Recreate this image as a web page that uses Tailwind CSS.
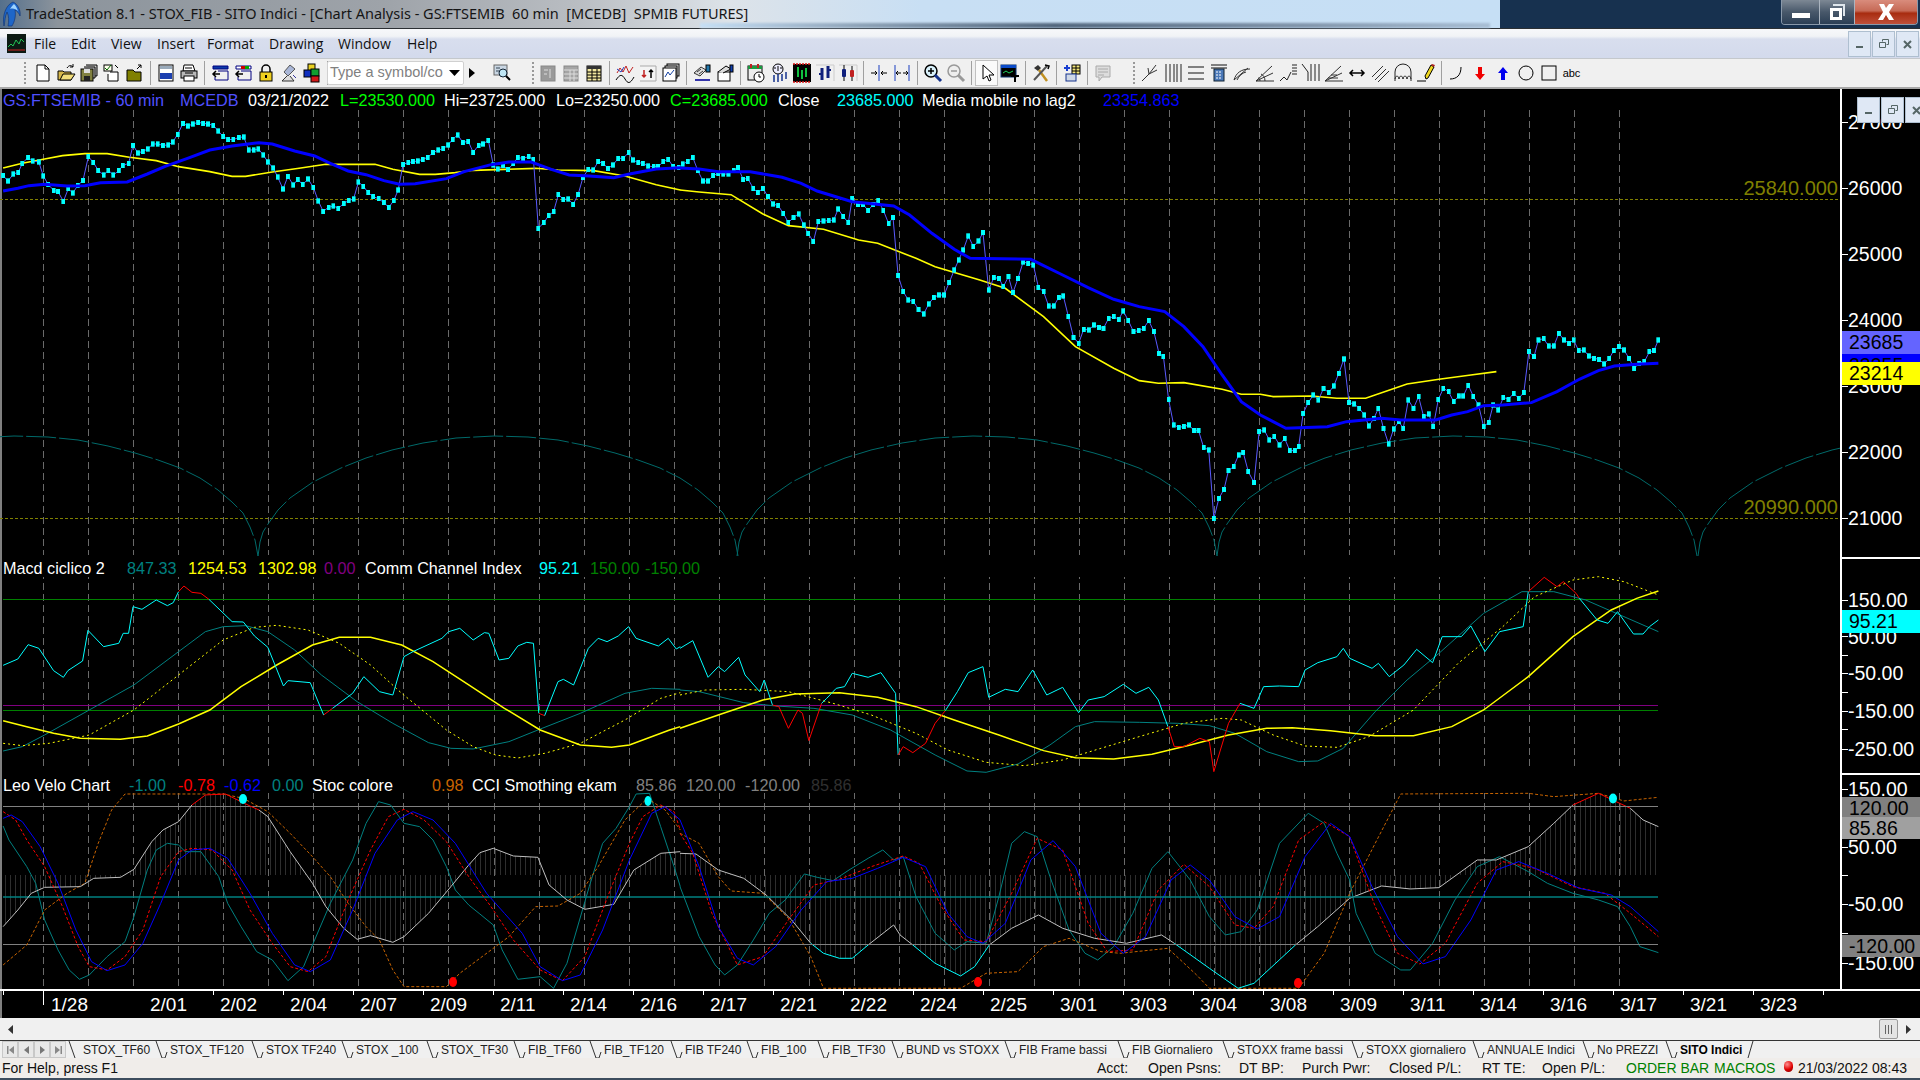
<!DOCTYPE html>
<html lang="en">
<head>
  <meta charset="UTF-8" />
  <title>TradeStation 8.1 - STOX_FIB - SITO Indici</title>
  <script src="https://cdn.jsdelivr.net/npm/@tailwindcss/browser@4"></script>
</head>
<body class="bg-black font-['Liberation_Sans',sans-serif]">
<div class="w-[1920px] h-[1080px] flex flex-col overflow-hidden">

  <!-- Title bar -->
  <div class="h-[28px] shrink-0 relative flex items-center justify-between bg-[linear-gradient(90deg,#55708c_0%,#8c949c_3%,#9ea3a9_20%,#b9bdc2_30%,#dde3e9_38%,#c8dff4_48%,#c6dff5_78.1%,#17314f_78.15%,#17314f_100%)]">
    <div class="absolute left-[700px] bottom-0 w-[790px] h-[5px] bg-[linear-gradient(90deg,#c6dff5_0%,#8ea3b8_20%,#52677e_45%,#7f93a9_75%,#a8bed4_100%)] blur-[1px]"></div>
    <div class="relative flex items-center">
      <svg class="w-[22px] h-[26px] ml-[1px]" viewBox="0 0 22 26"><path d="M3 25C1 14 5 4 12 1c5 2 8 9 7 14-1-3-3-5-5-6 1 5 0 11-3 16H7c1-5 1-10-1-14-2 4-2 9-3 14z" fill="#1e66c8" stroke="#0b2f70" stroke-width=".6"/><path d="M9 8c2-3 3-4 4-5 2 2 3 4 4 7-2-2-5-3-8-2z" fill="#9fd4ff"/></svg>
      <span class="ml-[3px] font-['Noto_Sans',sans-serif] text-[14.5px] text-[#151515] whitespace-pre">TradeStation 8.1 - STOX_FIB - SITO Indici - [Chart Analysis - GS:FTSEMIB  60 min  [MCEDB]  SPMIB FUTURES]</span>
    </div>
    <div class="relative flex self-start h-[25px] mr-[2px] border border-[#8a99aa] border-t-0 rounded-b-[4px] overflow-hidden">
      <div class="w-[38px] flex items-end justify-center pb-[6px] bg-[linear-gradient(#7d8894,#48586a_50%,#2c3f55)] border-r border-[#aab4bf]"><span class="w-[18px] h-[5px] bg-white"></span></div>
      <div class="w-[35px] flex items-center justify-center bg-[linear-gradient(#7d8894,#48586a_50%,#2c3f55)] border-r border-[#aab4bf]"><svg class="w-[18px] h-[18px]" viewBox="0 0 18 18"><path d="M5 1h12v12h-2V3H5z" fill="#dfe6ec"/><path d="M2 5h12v12H2zM5 8v6h6V8z" fill="#fff" fill-rule="evenodd"/></svg></div>
      <div class="w-[62px] flex items-center justify-center bg-[linear-gradient(#d98c7c,#c66a56_45%,#a82c10_55%,#c0503a)]"><svg class="w-[20px] h-[18px]" viewBox="0 0 20 18"><path d="M3 1h5l2 4 3-4h5l-5 8 5 8h-5l-3-5-3 5H2l5-8z" fill="#fff"/></svg></div>
    </div>
  </div>

  <!-- Menu bar -->
  <div class="h-[30px] shrink-0 flex items-center border-t border-[#2b2f33] bg-[linear-gradient(#f7f8fa_0%,#f1f3f6_25%,#d8deee_35%,#d3daec_100%)] font-['Open_Sans',sans-serif] text-[14px] text-[#111]">
    <svg class="w-[19px] h-[19px] ml-[7px]" viewBox="0 0 19 19"><rect width="19" height="19" fill="#0c1a14"/><path d="M1 13l3-3 2 2 3-6 3 4 2-5 3 3" fill="none" stroke="#23c455"/><path d="M1 16h17" stroke="#c22"/></svg>
    <span class="ml-[8px] w-[37px]">File</span>
    <span class="w-[40px]">Edit</span>
    <span class="w-[46px]">View</span>
    <span class="w-[50px]">Insert</span>
    <span class="w-[62px]">Format</span>
    <span class="w-[69px]">Drawing</span>
    <span class="w-[69px]">Window</span>
    <span>Help</span>
    <div class="ml-auto flex self-stretch gap-[1px] pt-[2px] pb-[1px] mr-[1px]">
      <div class="w-[23px] flex items-center justify-center bg-[#dfe8f5] border border-[#aebfd0]"><span class="w-[7px] h-[2px] mt-[6px] bg-[#566]"></span></div>
      <div class="w-[23px] flex items-center justify-center bg-[#dfe8f5] border border-[#aebfd0]"><svg class="w-[10px] h-[10px]" viewBox="0 0 10 10"><path d="M3.5 2.5v-2h6v5h-2M.5 3.5h6v5h-6z" fill="none" stroke="#566"/></svg></div>
      <div class="w-[23px] flex items-center justify-center bg-[#dfe8f5] border border-[#aebfd0]"><svg class="w-[9px] h-[9px]" viewBox="0 0 9 9"><path d="M1 1l7 7M8 1L1 8" stroke="#566" stroke-width="2"/></svg></div>
    </div>
  </div>

  <!-- Toolbar -->
  <div class="h-[31px] shrink-0 flex items-center pl-[24px] bg-[#f0f0f0] border-t border-[#c4c8cc] border-b-2 border-b-[#a8a8a8]">
    <span class="w-[2px] h-[22px] mr-[5px] border-l-2 border-dotted border-[#999]"></span>
    <!-- file -->
    <div class="w-[23px] flex justify-center"><svg class="w-5 h-5" viewBox="0 0 20 20"><path d="M4 2h8l4 4v12H4z" fill="#fff" stroke="#000"/><path d="M12 2v4h4" fill="none" stroke="#000"/></svg></div>
    <div class="w-[23px] flex justify-center"><svg class="w-5 h-5" viewBox="0 0 20 20"><path d="M2 8h5l1 1h7v8H2z" fill="#d6b74a" stroke="#000"/><path d="M4 17l3-6h12l-4 6z" fill="#f2de7b" stroke="#000"/><path d="M11 5c2-3 4-3 6-1M17 1v3h-3" fill="none" stroke="#000"/></svg></div>
    <div class="w-[23px] flex justify-center"><svg class="w-5 h-5" viewBox="0 0 20 20"><path d="M7 2h11v11h-2M5 4h11v11h-2" fill="#ccc" stroke="#000"/><rect x="2" y="6" width="12" height="12" fill="#808040" stroke="#000"/><rect x="5" y="6" width="6" height="4" fill="#ddd"/><rect x="5" y="13" width="6" height="5" fill="#222"/></svg></div>
    <div class="w-[23px] flex justify-center"><svg class="w-5 h-5" viewBox="0 0 20 20"><rect x="2" y="2" width="8" height="6" fill="#ffe" stroke="#000"/><path d="M3 5l2 2 4-5" fill="none" stroke="#060"/><path d="M8 9h8v9H6v-7" fill="#fff" stroke="#000"/><path d="M13 2l3 3" stroke="#000"/></svg></div>
    <div class="w-[23px] flex justify-center"><svg class="w-5 h-5" viewBox="0 0 20 20"><path d="M2 7h6l2 2h6v9H2z" fill="#808000" stroke="#000"/><path d="M12 6l4-4M13 2h3v3" fill="none" stroke="#000"/></svg></div>
    <span class="w-px h-[24px] ml-[4px] mr-[3px] bg-[#a0a0a0]"></span>
    <div class="w-[23px] flex justify-center"><svg class="w-5 h-5" viewBox="0 0 20 20"><rect x="3" y="2" width="14" height="16" fill="#fff" stroke="#000"/><rect x="4" y="3" width="12" height="3" fill="#9ab"/><rect x="4" y="10" width="12" height="6" fill="#1c3fb0"/></svg></div>
    <div class="w-[23px] flex justify-center"><svg class="w-5 h-5" viewBox="0 0 20 20"><path d="M5 2h9l2 6H4z" fill="#fff" stroke="#000"/><rect x="2" y="8" width="16" height="7" fill="#b9b9b9" stroke="#000"/><rect x="5" y="13" width="10" height="5" fill="#fff" stroke="#000"/><path d="M6 5h7M6 10h8" stroke="#000"/></svg></div>
    <span class="w-px h-[24px] ml-[4px] mr-[3px] bg-[#a0a0a0]"></span>
    <div class="w-[23px] flex justify-center"><svg class="w-5 h-5" viewBox="0 0 20 20"><path d="M3 3h15v3H3z" fill="#0a3aa8" stroke="#000080"/><path d="M8 8h10v9H5v-3" fill="none" stroke="#000080"/><path d="M10 11H3M6 8l-3 3 3 3" fill="none" stroke="#000" stroke-width="1.5"/></svg></div>
    <div class="w-[23px] flex justify-center"><svg class="w-5 h-5" viewBox="0 0 20 20"><path d="M3 3h15v3H3z" fill="#fff" stroke="#000080"/><path d="M8 3h4v3H8z" fill="#c00"/><path d="M12 3h4v3h-4z" fill="#0a0"/><path d="M8 8h10v9H5v-3" fill="none" stroke="#000080"/><path d="M10 11H3M6 8l-3 3 3 3" fill="none" stroke="#000" stroke-width="1.5"/></svg></div>
    <div class="w-[23px] flex justify-center"><svg class="w-5 h-5" viewBox="0 0 20 20"><path d="M6 9V6a4 4 0 018 0v3" fill="none" stroke="#000" stroke-width="1.5"/><rect x="4" y="9" width="12" height="9" fill="#f0d020" stroke="#000"/><rect x="9" y="12" width="2" height="3" fill="#000"/></svg></div>
    <div class="w-[23px] flex justify-center"><svg class="w-5 h-5" viewBox="0 0 20 20"><path d="M11 2l5 4-7 7-4-4z" fill="#a9b6d6" stroke="#555"/><path d="M8 13l-5 5h12l-4-5" fill="#ddd" stroke="#333"/><path d="M14 12l3 3" stroke="#339"/></svg></div>
    <div class="w-[23px] flex justify-center"><svg class="w-5 h-5" viewBox="0 0 20 20"><rect x="6" y="1" width="7" height="7" fill="#e8d020" stroke="#000"/><rect x="2" y="7" width="7" height="7" fill="#1030c0" stroke="#000"/><rect x="9" y="6" width="8" height="7" fill="#10a030" stroke="#000"/><rect x="9" y="13" width="8" height="6" fill="#d01818" stroke="#000"/></svg></div>
    <span class="w-px h-[24px] ml-[4px] mr-[3px] bg-[#a0a0a0]"></span>
    <!-- symbol box -->
    <div class="w-[137px] h-[24px] -ml-[4px] flex items-center bg-white border border-[#d0d0d0] rounded-[2px] pl-[2px] text-[14.5px] text-[#808080] whitespace-nowrap">Type a symbol/co<svg class="ml-auto mr-[3px] w-[11px] h-[6px]" viewBox="0 0 11 6"><path d="M0 0h11L5.500 6z"/></svg></div>
    <svg class="ml-[5px] w-[6px] h-[10px]" viewBox="0 0 6 10"><path d="M0 0l6 5-6 5z"/></svg>
    <div class="ml-[15px] w-[23px] flex justify-center"><svg class="w-5 h-5" viewBox="0 0 20 20"><rect x="2" y="2" width="13" height="10" fill="#c9d6e3" stroke="#666"/><path d="M4 5h4M4 8h3" stroke="#345"/><circle cx="11" cy="10" r="4" fill="#bfe6f5" stroke="#123"/><path d="M14 13l4 4" stroke="#000" stroke-width="2"/></svg></div>
    <span class="w-[2px] h-[22px] ml-[19px] mr-[2px] border-l-2 border-dotted border-[#999]"></span>
    <!-- disabled group -->
    <div class="w-[23px] flex justify-center"><svg class="w-5 h-5" viewBox="0 0 20 20"><rect x="3" y="3" width="14" height="15" fill="#9a9a9a" stroke="#888"/><path d="M6 7h4M6 11h3M12 6v9" stroke="#ddd"/></svg></div>
    <div class="w-[23px] flex justify-center"><svg class="w-5 h-5" viewBox="0 0 20 20"><rect x="3" y="3" width="14" height="15" fill="#a5a5a5" stroke="#888"/><path d="M3 7h14M3 11h14M3 15h14M9 7v11M13 7v11" stroke="#ddd"/></svg></div>
    <div class="w-[23px] flex justify-center"><svg class="w-5 h-5" viewBox="0 0 20 20"><rect x="3" y="3" width="14" height="15" fill="#f3e9a0" stroke="#000"/><rect x="3" y="3" width="14" height="3" fill="#333"/><path d="M3 9h14M3 12h14M3 15h14M8 6v12M13 6v12" stroke="#000"/></svg></div>
    <span class="w-px h-[24px] ml-[4px] mr-[3px] bg-[#a0a0a0]"></span>
    <div class="w-[23px] flex justify-center"><svg class="w-5 h-5" viewBox="0 0 20 20"><path d="M2 10l3-5 3 4 3-6 3 7 4-6" fill="none" stroke="#c02020"/><path d="M2 6l4 3 3-5" fill="none" stroke="#2040c0"/><path d="M1 17c4-6 6-6 9-1s5 5 9-2" fill="none" stroke="#000"/></svg></div>
    <div class="w-[23px] flex justify-center"><svg class="w-5 h-5" viewBox="0 0 20 20"><path d="M2 3h16v15H2" fill="#f4f4f4" stroke="#aaa"/><path d="M6 7v7M4 12l2 2 2-2" fill="none" stroke="#c02020" stroke-width="1.500"/><path d="M13 15V7M11 9l2-2 2 2" fill="none" stroke="#000" stroke-width="1.500"/></svg></div>
    <div class="w-[23px] flex justify-center"><svg class="w-5 h-5" viewBox="0 0 20 20"><rect x="6" y="1" width="12" height="12" fill="#ddd" stroke="#000"/><rect x="4" y="3" width="12" height="12" fill="#eee" stroke="#000"/><rect x="2" y="5" width="13" height="13" fill="#fff" stroke="#000"/><path d="M4 14l3-5 2 3 4-5" fill="none" stroke="#123fa0"/></svg></div>
    <span class="w-px h-[24px] ml-[4px] mr-[3px] bg-[#a0a0a0]"></span>
    <div class="w-[23px] flex justify-center"><svg class="w-5 h-5" viewBox="0 0 20 20"><path d="M2 10l7-6 5 3-6 6z" fill="#ddd" stroke="#333"/><path d="M5 9l4-3M7 11l4-3" stroke="#333"/><rect x="14" y="2" width="4" height="7" fill="#27a" stroke="#000"/><path d="M3 17h15" stroke="#33a" stroke-width="2"/></svg></div>
    <div class="w-[23px] flex justify-center"><svg class="w-5 h-5" viewBox="0 0 20 20"><rect x="3" y="9" width="12" height="9" fill="#fff" stroke="#000"/><path d="M3 9l8-6 5 3-8 4" fill="#ddd" stroke="#000"/><rect x="15" y="2" width="3" height="7" fill="#1040b0" stroke="#000"/></svg></div>
    <span class="w-px h-[24px] ml-[4px] mr-[3px] bg-[#a0a0a0]"></span>
    <div class="w-[23px] flex justify-center"><svg class="w-5 h-5" viewBox="0 0 20 20"><rect x="2" y="3" width="14" height="14" fill="#eee" stroke="#000"/><rect x="2" y="3" width="14" height="3" fill="#1a9a40"/><path d="M5 1v4M12 1v4" stroke="#c02020" stroke-width="2"/><circle cx="13" cy="14" r="5" fill="#fff" stroke="#000"/><path d="M13 11v3h2" fill="none" stroke="#000"/></svg></div>
    <div class="w-[23px] flex justify-center"><svg class="w-5 h-5" viewBox="0 0 20 20"><circle cx="9" cy="6" r="5" fill="#eef" stroke="#000"/><path d="M6 6v-2M9 8V3M12 6V4" stroke="#000"/><path d="M5 12v7M9 11v8M13 11v7M17 9v7" stroke="#14328c" stroke-width="1.500"/></svg></div>
    <div class="w-[23px] flex justify-center"><svg class="w-5 h-5" viewBox="0 0 20 20"><rect x="1" y="1" width="18" height="18" fill="#000"/><path d="M1 1h18M1 19h18" stroke="#e01818" stroke-width="1.500" stroke-dasharray="2 1"/><path d="M6 4v10M10 7v9M14 5v9" stroke="#10c040" stroke-width="2"/></svg></div>
    <div class="w-[23px] flex justify-center"><svg class="w-5 h-5" viewBox="0 0 20 20"><path d="M1 2h18v16" fill="none" stroke="#ccc"/><path d="M7 5v12M13 3v12" stroke="#10207c" stroke-width="3"/><path d="M4 11h3M13 7h3" stroke="#10207c" stroke-width="2"/></svg></div>
    <div class="w-[23px] flex justify-center"><svg class="w-5 h-5" viewBox="0 0 20 20"><path d="M1 2h18v16" fill="none" stroke="#ccc"/><path d="M6 2v16M14 3v15" stroke="#000"/><rect x="4" y="6" width="4" height="8" rx="1" fill="#10207c"/><rect x="12" y="7" width="4" height="7" rx="1" fill="#c02020"/></svg></div>
    <span class="w-px h-[24px] ml-[4px] mr-[3px] bg-[#a0a0a0]"></span>
    <div class="w-[23px] flex justify-center"><svg class="w-5 h-5" viewBox="0 0 20 20"><path d="M10 2v16" stroke="#1a3fc0"/><path d="M2 10h5M6 8l2 2-2 2M18 10h-5M14 8l-2 2 2 2" fill="none" stroke="#000"/></svg></div>
    <div class="w-[23px] flex justify-center"><svg class="w-5 h-5" viewBox="0 0 20 20"><path d="M3 2v16M17 2v16" stroke="#1a3fc0"/><path d="M5 10h4M6 8l-2 2 2 2M15 10h-4M14 8l2 2-2 2" fill="none" stroke="#000"/></svg></div>
    <span class="w-px h-[24px] ml-[4px] mr-[3px] bg-[#a0a0a0]"></span>
    <div class="w-[23px] flex justify-center"><svg class="w-5 h-5" viewBox="0 0 20 20"><circle cx="8" cy="8" r="6" fill="#d8f0fa" stroke="#000" stroke-width="1.500"/><path d="M8 5v6M5 8h6" stroke="#000" stroke-width="1.500"/><path d="M12 12l6 6" stroke="#14328c" stroke-width="3"/></svg></div>
    <div class="w-[23px] flex justify-center"><svg class="w-5 h-5" viewBox="0 0 20 20"><circle cx="8" cy="8" r="6" fill="#eee" stroke="#999" stroke-width="1.500"/><path d="M5 8h6" stroke="#999" stroke-width="1.500"/><path d="M12 12l6 6" stroke="#999" stroke-width="3"/></svg></div>
    <span class="w-px h-[24px] ml-[4px] mr-[3px] bg-[#a0a0a0]"></span>
    <div class="w-[23px] h-[26px] flex items-center justify-center bg-[#fafafa] border border-[#c0c0c0]"><svg class="w-5 h-5" viewBox="0 0 20 20"><path d="M6 2v14l4-3 2 5 2-1-2-5h5z" fill="#fff" stroke="#000"/></svg></div>
    <div class="w-[23px] flex justify-center"><svg class="w-5 h-5" viewBox="0 0 20 20"><rect x="1" y="2" width="15" height="12" fill="#000" stroke="#08306c"/><rect x="1" y="2" width="15" height="3" fill="#0a4ac8"/><path d="M3 10l3-2 3 2 4-2" fill="none" stroke="#20d060"/><path d="M11 12h8v2h-3v5h-2v-5h-3z"/></svg></div>
    <span class="w-px h-[24px] ml-[4px] mr-[3px] bg-[#a0a0a0]"></span>
    <div class="w-[23px] flex justify-center"><svg class="w-5 h-5" viewBox="0 0 20 20"><path d="M3 5l4-3 3 3-3 3z" fill="#333"/><path d="M8 7l8 11" stroke="#c09020" stroke-width="2.500"/><path d="M16 3l-13 14" stroke="#555" stroke-width="2"/><path d="M14 2l4 1-1 3" fill="none" stroke="#000" stroke-width="1.500"/></svg></div>
    <span class="w-px h-[24px] ml-[4px] mr-[3px] bg-[#a0a0a0]"></span>
    <div class="w-[23px] flex justify-center"><svg class="w-5 h-5" viewBox="0 0 20 20"><rect x="10" y="2" width="8" height="9" fill="#f4e77a" stroke="#000"/><path d="M10 5h8M10 8h8M14 2v9" stroke="#000"/><rect x="4" y="11" width="10" height="7" fill="#cfd8e6" stroke="#14328c"/><path d="M5 2v6M2 5h6" stroke="#1a3fd0" stroke-width="2"/></svg></div>
    <span class="w-px h-[24px] ml-[4px] mr-[3px] bg-[#a0a0a0]"></span>
    <div class="w-[23px] flex justify-center"><svg class="w-5 h-5" viewBox="0 0 20 20"><path d="M3 3h14v11H9l-3 4v-4H3z" fill="#ddd" stroke="#aaa"/><path d="M5 6h10M5 9h10M5 12h6" stroke="#aaa"/></svg></div>
    <span class="w-[2px] h-[22px] ml-[19px] mr-[3px] border-l-2 border-dotted border-[#999]"></span>
    <!-- drawing tools -->
    <div class="w-[23px] flex justify-center"><svg class="w-5 h-5" viewBox="0 0 20 20"><path d="M2 18l7-7M9 11l7-9M9 11l8-4M9 11l-1-6" fill="none" stroke="#333"/></svg></div>
    <div class="w-[23px] flex justify-center"><svg class="w-5 h-5" viewBox="0 0 20 20"><path d="M3 1v18M7 1v18M11 1v18M14 1v18M18 1v18" stroke="#222"/></svg></div>
    <div class="w-[23px] flex justify-center"><svg class="w-5 h-5" viewBox="0 0 20 20"><path d="M2 4h16M2 10h16M2 16h16" stroke="#111" stroke-width="1.200"/></svg></div>
    <div class="w-[23px] flex justify-center"><svg class="w-5 h-5" viewBox="0 0 20 20"><path d="M2 2h16M2 5h16" stroke="#111"/><rect x="5" y="6" width="10" height="12" fill="#4a78b8" stroke="#123"/><path d="M7 9h6M7 12h6M7 15h6" stroke="#fff" stroke-dasharray="2 1"/></svg></div>
    <div class="w-[23px] flex justify-center"><svg class="w-5 h-5" viewBox="0 0 20 20"><path d="M2 17c2-7 7-11 16-11M5 17c2-4 5-7 9-8M2 17l14-12" fill="none" stroke="#333"/></svg></div>
    <div class="w-[23px] flex justify-center"><svg class="w-5 h-5" viewBox="0 0 20 20"><path d="M1 18h18M1 18L17 3M1 18l17-8M5 18c0-2-1-3-2-3M10 18c0-4-2-6-4-7" fill="none" stroke="#333"/></svg></div>
    <div class="w-[23px] flex justify-center"><svg class="w-5 h-5" viewBox="0 0 20 20"><path d="M2 18l4-4 3 3 4-8M14 2h5M14 5h5M14 8h5M14 11h5" fill="none" stroke="#222"/></svg></div>
    <div class="w-[23px] flex justify-center"><svg class="w-5 h-5" viewBox="0 0 20 20"><path d="M1 1l6 8v9M10 1v17M14 1v17M18 1v17" fill="none" stroke="#222"/></svg></div>
    <div class="w-[23px] flex justify-center"><svg class="w-5 h-5" viewBox="0 0 20 20"><path d="M1 18h18M1 18L17 3M1 18l17-8M4 15h10M7 12h6" fill="none" stroke="#333"/></svg></div>
    <div class="w-[23px] flex justify-center"><svg class="w-5 h-5" viewBox="0 0 20 20"><path d="M3 10h14M6 7l-3 3 3 3M14 7l3 3-3 3" fill="none" stroke="#000" stroke-width="1.500"/></svg></div>
    <div class="w-[23px] flex justify-center"><svg class="w-5 h-5" viewBox="0 0 20 20"><path d="M2 14L13 3M5 17L16 6M8 19L19 8" stroke="#333"/></svg></div>
    <div class="w-[23px] flex justify-center"><svg class="w-5 h-5" viewBox="0 0 20 20"><path d="M2 18V9a8 8 0 0116 0v9M2 16c1-4 3-4 4 0 1-4 3-4 4 0 1-4 3-4 4 0 1-4 3-4 4 0" fill="none" stroke="#222"/></svg></div>
    <div class="w-[23px] flex justify-center"><svg class="w-5 h-5" viewBox="0 0 20 20"><path d="M1 18h9" stroke="#000"/><path d="M10 16l2-1 6-11-3-2-6 11z" fill="#f0d820" stroke="#000"/><path d="M15 2l3 2 1-2-3-1z" fill="#b02020"/></svg></div>
    <span class="w-px h-[24px] ml-[4px] mr-[3px] bg-[#a0a0a0]"></span>
    <div class="w-[23px] flex justify-center"><svg class="w-5 h-5" viewBox="0 0 20 20"><path d="M3 16c7 0 11-4 11-12" fill="none" stroke="#000"/></svg></div>
    <div class="w-[23px] flex justify-center"><svg class="w-5 h-5" viewBox="0 0 20 20"><path d="M8 4h4v7h3l-5 6-5-6h3z" fill="#f00000"/></svg></div>
    <div class="w-[23px] flex justify-center"><svg class="w-5 h-5" viewBox="0 0 20 20"><path d="M8 17h4v-7h3l-5-6-5 6h3z" fill="#0000f0"/></svg></div>
    <div class="w-[23px] flex justify-center"><svg class="w-5 h-5" viewBox="0 0 20 20"><circle cx="10" cy="10" r="7" fill="none" stroke="#000"/></svg></div>
    <div class="w-[23px] flex justify-center"><svg class="w-5 h-5" viewBox="0 0 20 20"><rect x="3" y="3" width="14" height="14" fill="none" stroke="#000"/></svg></div>
    <span class="w-[23px] text-center text-[11px] leading-none text-black">abc</span>
  </div>

  <!-- Chart window -->
  <div class="h-[929px] shrink-0 flex bg-black">
    <div class="relative w-[1840px] flex flex-col border-l-2 border-[#808080]">
      <svg class="absolute top-0 -left-[2px] [&_polyline]:[vector-effect:non-scaling-stroke]" width="1840" height="929" viewBox="0 89 1840 929">
        <defs>
          <marker id="barL" markerUnits="userSpaceOnUse" markerWidth="9" markerHeight="16" refX="4.500" refY="8"><rect width="9" height="16" fill="#00ffff"/></marker>
          <marker id="barR" markerUnits="userSpaceOnUse" markerWidth="6.400" markerHeight="16" refX="3.200" refY="8"><rect width="6.400" height="16" fill="#00ffff"/></marker>
          <path id="grid" d="M43.500 0V1000M88.500 0V1000M133.500 0V1000M178.500 0V1000M223.500 0V1000M268.500 0V1000M313.500 0V1000M358.500 0V1000M403.500 0V1000M448.500 0V1000M494.500 0V1000M539.500 0V1000M584.500 0V1000M629.500 0V1000M674.500 0V1000M719.500 0V1000M764.500 0V1000M809.500 0V1000M854.500 0V1000M899.500 0V1000M944.500 0V1000M989.500 0V1000M1034.500 0V1000M1079.500 0V1000M1124.500 0V1000M1169.500 0V1000M1214.500 0V1000M1259.500 0V1000M1304.500 0V1000M1349.500 0V1000M1394.500 0V1000M1439.500 0V1000M1484.500 0V1000M1529.500 0V1000M1574.500 0V1000M1619.500 0V1000"/>
          <clipPath id="gridClip"><rect x="0" y="108" width="1840" height="447"/><rect x="0" y="577" width="1840" height="193"/><rect x="0" y="793" width="1840" height="194"/></clipPath>
          <polyline id="arc" points="0,556 2,542 5,532 10,524 20,510 32,498 55,482 83,468 108,458 134,450 165,443 198,438 236,436 270,437 300,440 330,446 357,453 380,460 402,468 422,478 440,490 454,502 465,513 472,527 477,540 480,556"/>
          <pattern id="hist" patternUnits="userSpaceOnUse" width="5" height="10"><rect width="1" height="10" fill="#2e2e2e"/></pattern>
          <clipPath id="histClip">
            <polygon transform="translate(0 770) scale(.4464 .3333)" points="7,315 7,470 40,420 70,370 100,352 180,350 210,325 270,322 300,298 340,215 365,180 400,155 430,105 460,75 505,72 560,108 580,120 600,140 650,245 700,340 730,410 770,475 800,508 830,497 880,517 905,500 960,430 1010,350 1050,285 1075,248 1105,235 1150,258 1205,262 1230,345 1270,390 1310,418 1375,403 1420,300 1480,250 1524,245 1524,315"/>
            <polygon transform="translate(680 560) scale(.6378 .3333)" points="0,945 0,880 25,882 60,930 100,955 135,1005 175,1080 205,1150 225,1180 250,1195 270,1195 295,1155 335,1095 345,1125 365,1155 400,1210 440,1248 462,1220 485,1155 520,1105 562,1065 600,1105 650,1135 700,1150 755,1125 775,1150 830,1225 875,1285 900,1270 965,1155 1000,1100 1050,1015 1100,978 1145,987 1190,983 1250,900 1280,900 1330,860 1370,790 1400,735 1440,700 1490,745 1510,780 1534,800 1534,945"/>
          </clipPath>
        </defs>

        <!-- gridlines -->
        <use href="#grid" stroke="#6a6a6a" stroke-dasharray="7 4" clip-path="url(#gridClip)"/>
        <rect x="0" y="780" width="1660" height="210" fill="url(#hist)" clip-path="url(#histClip)"/>

        <!-- price panel levels -->
        <path d="M0 199.500H1840M0 518.500H1840" stroke="#808000" stroke-dasharray="3 2"/>
        <g fill="none" stroke="#006a6a" stroke-dasharray="30 3">
          <use href="#arc" x="-222"/><use href="#arc" x="258"/><use href="#arc" x="737"/><use href="#arc" x="1217"/><use href="#arc" x="1698"/>
        </g>

        <g fill="none">
          <!-- price panel, left half -->
          <g transform="translate(0 100) scale(.4464 .3333)">
            <polyline stroke="#ffff00" stroke-width="1.600" points="7,204 50,190 100,177 140,167 190,161 240,161 290,172 350,182 400,200 470,215 520,229 550,229 610,216 670,205 730,193 840,193 880,208 940,223 975,223 1020,218 1060,211 1130,208 1200,205 1250,210 1330,212 1400,228 1470,254 1524,270"/>
            <polyline stroke="#5a5aff" marker-start="url(#barL)" marker-mid="url(#barL)" marker-end="url(#barL)" points="7,227 18,243 30,222 41,217 50,190 63,172 73,183 87,186 97,228 108,253 120,271 130,275 142,304 153,266 163,279 174,257 186,241 198,170 209,187 220,211 232,225 243,211 254,225 266,212 275,197 288,190 298,136 309,159 320,154 331,147 342,132 353,132 365,136 377,135 387,126 398,103 410,70 421,78 432,72 444,67 455,70 466,72 478,76 489,93 500,110 511,118 523,119 535,112 546,111 557,150 568,150 579,147 590,165 600,186 612,204 622,231 634,267 645,229 657,255 667,238 678,254 690,237 702,262 713,303 724,334 736,322 747,318 758,325 770,310 781,302 792,297 803,246 814,259 825,278 836,290 848,296 860,308 871,322 882,302 892,270 903,193 915,188 925,185 936,183 947,178 958,172 970,158 982,150 993,146 1004,135 1014,118 1025,105 1037,127 1049,124 1060,157 1072,136 1082,132 1094,121 1105,195 1115,207 1127,197 1138,209 1150,190 1160,173 1172,175 1184,170 1195,178 1206,385 1218,368 1229,347 1240,335 1251,283 1262,298 1273,297 1284,313 1295,284 1306,232 1318,208 1329,210 1340,185 1351,190 1362,205 1373,195 1385,175 1396,175 1408,158 1418,180 1430,188 1440,190 1452,198 1464,200 1474,200 1486,185 1497,178 1508,200 1520,202"/>
            <polyline stroke="#0000ff" stroke-width="3" points="7,273 40,265 65,257 100,253 150,258 190,257 225,248 285,246 330,222 370,199 420,175 470,150 520,138 580,128 610,132 660,153 705,168 740,190 780,213 820,224 860,242 895,253 930,251 1000,236 1040,215 1100,194 1140,186 1190,186 1235,208 1275,225 1320,228 1375,233 1410,222 1470,207 1524,203"/>
          </g>
          <!-- price panel, right half -->
          <g transform="translate(680 110) scale(.6378 .3333)">
            <polyline stroke="#ffff00" stroke-width="1.600" points="0,240 30,246 80,254 130,312 170,347 225,358 280,390 310,400 370,445 400,470 470,510 510,535 570,620 620,710 680,775 720,812 750,820 790,818 850,838 880,853 910,853 930,860 990,858 1030,865 1075,865 1140,822 1190,808 1240,795 1280,785"/>
            <polyline stroke="#5a5aff" marker-start="url(#barR)" marker-mid="url(#barR)" marker-end="url(#barR)" points="4,162 12,155 20,142 28,182 36,213 44,213 52,197 60,190 68,192 76,192 84,182 91,172 99,208 106,205 115,235 122,248 130,235 138,260 146,282 154,287 162,310 170,338 178,322 186,312 194,345 201,370 209,395 217,335 225,333 233,332 241,330 248,297 256,320 264,338 270,265 279,283 287,283 295,302 303,283 311,272 319,302 327,340 334,323 342,497 350,545 358,570 366,575 374,598 382,612 390,582 398,562 406,555 414,555 422,518 430,480 437,450 444,420 452,378 460,410 468,393 475,368 484,540 492,503 500,505 507,530 515,500 522,548 530,505 538,456 546,460 554,465 562,532 570,545 578,588 586,588 594,562 601,558 609,620 617,682 625,700 633,658 641,660 649,645 657,652 664,655 672,625 680,620 688,628 695,603 703,632 711,665 719,662 727,655 735,632 743,665 751,730 758,740 766,868 774,945 782,952 790,950 798,945 806,962 813,962 821,1012 829,1020 837,1225 845,1165 853,1138 860,1082 868,1070 876,1035 883,1027 891,1085 900,1118 908,965 916,960 924,990 932,980 940,1005 948,985 956,1022 964,1022 970,1010 977,910 985,878 993,855 1001,870 1009,835 1017,848 1025,828 1033,790 1041,747 1049,878 1057,882 1065,895 1073,915 1080,948 1088,925 1095,895 1103,955 1111,1002 1119,957 1127,935 1134,955 1142,870 1150,895 1158,860 1166,920 1174,912 1181,950 1189,868 1197,835 1205,845 1213,875 1221,858 1228,858 1236,826 1244,860 1252,885 1260,950 1268,937 1275,885 1283,900 1291,862 1299,868 1307,850 1315,865 1323,848 1331,725 1339,740 1346,690 1354,686 1362,708 1370,708 1378,670 1386,690 1394,700 1401,690 1409,722 1417,720 1425,738 1433,745 1441,748 1449,762 1457,745 1464,722 1472,710 1480,720 1488,745 1496,775 1504,760 1512,755 1520,725 1527,722 1534,690"/>
            <polyline stroke="#0000ff" stroke-width="3" points="0,174 30,177 60,185 110,185 160,202 190,220 215,243 270,275 335,288 360,315 395,370 430,418 455,445 550,448 600,495 640,533 680,568 720,590 760,605 790,650 820,710 850,795 880,875 910,915 950,955 1015,950 1045,935 1100,925 1130,930 1185,930 1210,915 1235,905 1260,887 1290,885 1335,878 1375,845 1410,808 1440,782 1465,768 1500,763 1534,760"/>
          </g>

          <!-- oscillator panel levels -->
          <path d="M3 599.500H1658M3 710.500H1658" stroke="#008000"/>
          <path d="M3 705.500H1658" stroke="#800080"/>

          <!-- oscillator panel, left half -->
          <g transform="translate(0 550) scale(.4464 .3333)">
            <polyline stroke="#008080" points="7,603 50,590 100,555 200,480 300,405 400,305 460,245 500,230 550,227 600,245 660,300 720,375 800,455 880,520 960,578 1010,595 1060,597 1140,575 1205,540 1300,490 1400,430 1460,415 1524,418"/>
            <polyline stroke="#ffff00" stroke-dasharray="2 3" points="7,580 50,587 110,580 200,555 300,480 400,375 500,270 570,232 620,226 690,240 760,280 830,345 900,430 1000,540 1060,590 1110,615 1160,624 1220,610 1300,580 1400,510 1480,445 1524,428"/>
            <polyline stroke="#ffff00" stroke-width="1.500" points="7,512 60,530 120,550 180,565 270,568 330,558 400,522 470,480 540,410 620,345 700,285 760,262 830,262 900,285 970,335 1050,405 1130,475 1210,540 1300,585 1370,592 1410,585 1500,540 1524,530"/>
            <polyline stroke="#00ffff" points="7,346 40,327 63,284 87,295 120,362 142,382 152,362 185,333 197,241 232,290 266,280 276,250 288,250 298,170 318,178 350,150 375,167 388,158 400,125"/>
            <polyline stroke="#ff0000" points="400,125 412,108 430,127 450,130 468,148"/>
            <polyline stroke="#00ffff" points="468,148 520,215 545,216 570,258 600,292 635,408 645,392 695,398 725,495"/>
            <polyline stroke="#ff0000" points="725,495 745,475"/>
            <polyline stroke="#00ffff" points="745,475 790,430 815,380 850,425 880,435 905,320 925,305 990,265 1005,245 1030,235 1060,270 1085,248 1095,250 1118,330 1140,325 1160,288 1180,277 1195,280 1207,490"/>
            <polyline stroke="#ff0000" points="1207,490 1220,497"/>
            <polyline stroke="#00ffff" points="1220,497 1250,395 1262,388 1285,405 1318,295 1340,265 1360,275 1385,258 1408,230 1425,265 1475,288 1497,265 1515,297 1524,290"/>
          </g>
          <!-- oscillator panel, right half, and lower panel's right half share this offset -->
          <g transform="translate(680 560) scale(.6378 .3333)">
            <polyline stroke="#008080" points="0,390 30,395 100,428 150,438 210,445 270,465 330,510 400,585 450,633 480,637 530,612 580,555 620,500 650,485 720,487 780,490 830,497 870,520 920,575 970,605 1000,603 1040,565 1090,455 1140,360 1190,280 1260,160 1320,95 1370,95 1420,120 1480,170 1534,215"/>
            <polyline stroke="#ffff00" stroke-dasharray="2 3" points="0,405 40,390 100,388 170,395 240,430 300,465 370,520 420,570 480,607 540,617 600,600 660,565 720,530 790,490 850,475 880,480 930,525 980,558 1030,562 1080,530 1150,450 1220,310 1290,200 1340,110 1400,60 1440,50 1480,65 1534,105"/>
            <polyline stroke="#ffff00" stroke-width="1.500" points="0,505 60,465 130,420 180,402 250,398 310,412 370,440 430,480 500,525 570,572 620,593 680,597 740,583 800,555 860,525 920,505 960,503 1020,512 1090,527 1150,527 1210,500 1260,450 1330,350 1400,230 1460,150 1500,115 1534,93"/>
            <polyline stroke="#00ffff" points="0,265 20,242 44,352 60,320 70,335 92,292 102,345 125,395 132,360 145,435"/>
            <polyline stroke="#ff0000" points="145,435 155,440 170,505 185,450 192,460 202,542 222,430"/>
            <polyline stroke="#00ffff" points="222,430 230,415 245,385 258,380 270,340 295,352 315,338 338,400 342,585"/>
            <polyline stroke="#ff0000" points="342,585 350,560 365,578 385,550 400,490 416,452"/>
            <polyline stroke="#00ffff" points="416,452 435,395 452,338 475,320 484,412 510,388 530,395 553,330 575,405 600,382 625,458 640,420 665,410 695,373 715,400 735,382 750,420 765,500"/>
            <polyline stroke="#ff0000" points="765,500 775,560 790,560 815,535 830,545 837,635 860,490 878,430"/>
            <polyline stroke="#00ffff" points="878,430 900,445 915,380 940,378 970,380 980,330 1000,308 1030,290 1040,265 1050,295 1085,325 1095,310 1112,350 1135,315 1155,268 1180,308 1195,230 1225,230 1240,198 1262,275 1285,215 1322,200 1330,95"/>
            <polyline stroke="#ff0000" points="1330,95 1355,52 1375,80 1385,65 1405,100 1410,115"/>
            <polyline stroke="#00ffff" points="1410,115 1438,180 1455,190 1470,155 1495,222 1510,222 1520,200 1534,180"/>

            <!-- lower panel, right half -->
            <polyline stroke="#008080" points="0,980 30,1130 55,1215 70,1245 90,1215 115,1140 140,1060 165,1020 195,942 215,952 240,962 265,930 295,895 318,870 335,900 350,890 370,1010 400,1120 430,1170 450,1145 480,1150 500,1010 520,850 540,815 560,830 580,950 610,1110 635,1180 655,1200 680,1160 710,1060 740,925 765,875 800,960 830,1070 855,1125 880,1115 905,1050 940,850 985,760 1010,790 1030,880 1050,960 1060,1060 1090,1180 1130,1230 1145,1230 1180,1150 1215,1020 1250,920 1285,890 1330,935 1360,970 1400,1000 1440,1020 1470,1040 1490,1100 1505,1160 1534,1178"/>
            <polyline stroke="#c86400" stroke-dasharray="3 2" points="0,820 30,850 60,950 80,993 130,1000 170,1075 205,1190 225,1285 440,1285 480,1240 530,1235 570,1160 610,1135 660,1175 690,1180 765,1165 810,1245 830,1285 970,1285 1010,1180 1050,1000 1090,850 1130,702 1330,700 1370,710 1440,700 1480,723 1534,712"/>
            <polyline stroke="#c0c0c0" points="0,880 25,882 60,930 100,955 135,1005 175,1080 205,1150"/>
            <polyline stroke="#00ffff" points="205,1150 225,1180 250,1195 270,1195 295,1155"/>
            <polyline stroke="#c0c0c0" points="295,1155 335,1095 345,1125 365,1155"/>
            <polyline stroke="#00ffff" points="365,1155 400,1210 440,1248 462,1220 485,1155"/>
            <polyline stroke="#c0c0c0" points="485,1155 520,1105 562,1065 600,1105 650,1135 700,1150 755,1125 775,1150"/>
            <polyline stroke="#00ffff" points="775,1150 830,1225 875,1285 900,1270 965,1155"/>
            <polyline stroke="#c0c0c0" points="965,1155 1000,1100 1050,1015 1100,978 1145,987 1190,983 1250,900 1280,900 1330,860 1370,790 1400,735"/>
            <polyline stroke="#ff0000" points="1400,735 1440,700 1490,745"/>
            <polyline stroke="#c0c0c0" points="1490,745 1510,780 1534,800"/>
            <polyline stroke="#ff0000" stroke-dasharray="3 2" points="0,820 20,880 50,1060 90,1215 130,1190 170,1080 210,975 250,958 300,920 350,888 375,910 410,1040 445,1140 480,1145 520,1000 560,835 600,870 640,1090 670,1175 710,1170 750,990 790,913 830,980 870,1095 900,1105 930,1040 970,840 1010,785 1050,830 1090,1040 1125,1180 1160,1212 1200,1150 1250,970 1290,905 1340,925 1400,980 1450,1000 1490,1060 1534,1130"/>
            <polyline stroke="#0000ff" points="0,780 30,920 60,1100 90,1195 115,1215 150,1160 190,1050 230,965 270,955 310,925 350,892 385,920 420,1060 450,1130 475,1150 510,1090 550,900 585,842 620,920 660,1120 695,1180 730,1130 770,960 800,915 830,960 870,1070 905,1107 940,1070 980,890 1020,790 1050,830 1085,980 1125,1130 1165,1212 1200,1190 1240,1080 1280,930 1315,905 1360,940 1410,985 1460,1005 1490,1040 1534,1115"/>
          </g>

          <!-- lower panel levels -->
          <path d="M3 806.500H1658M3 944.500H1658" stroke="#808080"/>
          <path d="M3 897H1658" stroke="#008080" stroke-width="1.500"/>

          <!-- lower panel, left half -->
          <g transform="translate(0 770) scale(.4464 .3333)">
            <polyline stroke="#008080" points="7,168 20,210 60,290 80,340 100,450 130,540 155,600 178,628 200,615 240,560 280,515 300,440 330,300 350,240 375,220 400,225 415,245 450,245 490,320 510,400 540,470 575,545 610,570 645,632 680,590 700,525 740,400 790,270 820,160 848,95 875,105 905,160 940,170 970,210 1000,290 1020,360 1050,405 1075,432 1105,465 1125,540 1160,628 1210,620 1240,655 1270,580 1320,350 1350,220 1380,175 1410,110 1425,72 1455,70 1480,170 1510,290 1524,350"/>
            <polyline stroke="#c86400" stroke-dasharray="3 2" points="7,585 60,525 100,420 150,370 190,340 220,220 250,120 280,72 470,72 500,72 545,85 600,125 650,190 700,260 740,320 780,400 820,470 850,510 880,600 905,650 1000,650 1030,610 1080,560 1140,500 1200,410 1250,408 1300,370 1340,290 1400,150 1450,85 1490,120 1524,180"/>
            <polyline stroke="#c0c0c0" points="7,470 40,420 70,370 100,352 180,350 210,325 270,322 300,298 340,215 365,180 400,155 430,105"/>
            <polyline stroke="#ff0000" points="430,105 460,75 505,72 560,108 580,120"/>
            <polyline stroke="#c0c0c0" points="580,120 600,140 650,245 700,340 730,410 770,475 800,508 830,497 880,517 905,500 960,430 1010,350 1050,285 1075,248 1105,235 1150,258 1205,262 1230,345 1270,390 1310,418 1375,403 1420,300 1480,250 1524,245"/>
            <polyline stroke="#ff0000" stroke-dasharray="3 2" points="7,125 35,150 60,210 100,290 140,410 175,530 200,590 240,600 280,560 320,480 360,320 400,245 430,235 475,240 520,300 560,420 610,520 650,590 690,605 730,560 780,390 830,240 870,140 905,118 950,150 1000,215 1050,320 1100,410 1150,510 1210,600 1260,632 1310,560 1370,350 1410,220 1440,140 1480,105 1510,125 1524,180"/>
            <polyline stroke="#0000ff" points="7,145 25,135 50,155 90,230 130,340 170,480 205,575 240,602 280,585 320,520 360,400 400,270 430,240 470,235 510,265 560,370 610,490 660,585 695,605 740,570 790,420 840,250 890,150 925,125 970,150 1020,220 1090,370 1130,430 1170,490 1210,590 1260,632 1300,615 1350,480 1410,270 1460,130 1490,110 1524,150"/>
          </g>
        </g>

        <!-- signal dots -->
        <ellipse cx="243" cy="799" rx="4" ry="5" fill="#00ffff"/>
        <ellipse cx="648" cy="801" rx="3.500" ry="5" fill="#00ffff"/>
        <ellipse cx="1613" cy="798.500" rx="4" ry="5" fill="#00ffff"/>
        <ellipse cx="453" cy="982" rx="4" ry="5" fill="#ff0000"/>
        <ellipse cx="978" cy="982" rx="4" ry="5" fill="#ff0000"/>
        <ellipse cx="1298" cy="983" rx="4" ry="5" fill="#ff0000"/>

        <!-- time scale rule and ticks -->
        <path d="M0 990H1840" stroke="#fff" stroke-width="2"/>
        <path d="M3.500 990v5M43.500 990v15M213.500 990v5M283.500 990v5M353.500 990v5M423.500 990v5M493.500 990v5M563.500 990v5M633.500 990v5M703.500 990v5M773.500 990v5M843.500 990v5M913.500 990v5M983.500 990v5M1053.500 990v5M1123.500 990v5M1193.500 990v5M1263.500 990v5M1333.500 990v5M1403.500 990v5M1473.500 990v5M1543.500 990v5M1613.500 990v5M1683.500 990v5M1753.500 990v5M1823.500 990v5" stroke="#fff"/>
      </svg>

      <!-- price panel -->
      <div class="relative h-[469px] shrink-0">
        <div class="h-[22px] flex items-center pl-px text-[16.2px] whitespace-pre text-white">
          <span class="w-[177px] text-[#5050ff]">GS:FTSEMIB - 60 min</span>
          <span class="w-[68px] text-[#5050ff]">MCEDB</span>
          <span class="w-[92px]">03/21/2022</span>
          <span class="w-[104px] text-[#00ff00]">L=23530.000</span>
          <span class="w-[112px]">Hi=23725.000</span>
          <span class="w-[114px]">Lo=23250.000</span>
          <span class="w-[108px] text-[#00ff00]">C=23685.000</span>
          <span class="w-[59px]">Close</span>
          <span class="w-[85px] text-[#00ffff]">23685.000</span>
          <span class="w-[181px]">Media mobile no lag2</span>
          <span class="text-[#0000ff]">23354.863</span>
        </div>
        <span class="absolute right-[2px] top-[88px] text-[20px] leading-[22px] text-[#808000]">25840.000</span>
        <span class="absolute right-[2px] top-[407px] text-[20px] leading-[22px] text-[#808000]">20990.000</span>
      </div>

      <!-- oscillator panel -->
      <div class="relative h-[216px] shrink-0">
        <div class="h-[20px] flex items-center pl-px text-[16.2px] whitespace-pre text-white">
          <span class="w-[124px]">Macd ciclico 2</span>
          <span class="w-[61px] text-[#008080]">847.33</span>
          <span class="w-[70px] text-[#ffff00]">1254.53</span>
          <span class="w-[66px] text-[#ffff00]">1302.98</span>
          <span class="w-[41px] text-[#800080]">0.00</span>
          <span class="w-[174px]">Comm Channel Index</span>
          <span class="w-[51px] text-[#00ffff]">95.21</span>
          <span class="w-[55px] text-[#008000]">150.00</span>
          <span class="text-[#008000]">-150.00</span>
        </div>
      </div>

      <!-- lower panel -->
      <div class="relative h-[216px] shrink-0">
        <div class="h-[22px] flex items-center pl-px text-[16.2px] whitespace-pre text-white">
          <span class="w-[126px]">Leo Velo Chart</span>
          <span class="w-[49px] text-[#008080]">-1.00</span>
          <span class="w-[46px] text-[#ff0000]">-0.78</span>
          <span class="w-[48px] text-[#0000ff]">-0.62</span>
          <span class="w-[40px] text-[#008080]">0.00</span>
          <span class="w-[120px]">Stoc colore</span>
          <span class="w-[40px] text-[#c86400]">0.98</span>
          <span class="w-[164px]">CCI Smothing ekam</span>
          <span class="w-[50px] text-[#808080]">85.86</span>
          <span class="w-[59px] text-[#808080]">120.00</span>
          <span class="w-[66px] text-[#808080]">-120.00</span>
          <span class="text-[#303030]">85.86</span>
        </div>
      </div>

      <!-- time scale -->
      <div class="relative h-[28px] shrink-0 flex items-center pl-[49px] pt-[2px] text-[19px] text-white">
        <span class="w-[99px]">1/28</span><span class="w-[70px]">2/01</span><span class="w-[70px]">2/02</span><span class="w-[70px]">2/04</span><span class="w-[70px]">2/07</span><span class="w-[70px]">2/09</span><span class="w-[70px]">2/11</span><span class="w-[70px]">2/14</span><span class="w-[70px]">2/16</span><span class="w-[70px]">2/17</span><span class="w-[70px]">2/21</span><span class="w-[70px]">2/22</span><span class="w-[70px]">2/24</span><span class="w-[70px]">2/25</span><span class="w-[70px]">3/01</span><span class="w-[70px]">3/03</span><span class="w-[70px]">3/04</span><span class="w-[70px]">3/08</span><span class="w-[70px]">3/09</span><span class="w-[70px]">3/11</span><span class="w-[70px]">3/14</span><span class="w-[70px]">3/16</span><span class="w-[70px]">3/17</span><span class="w-[70px]">3/21</span><span class="w-[70px]">3/23</span>
      </div>
    </div>

    <!-- Price axis: every label sits at its value on the scale -->
    <div class="relative w-[80px] text-[19.5px] leading-[22px] text-white overflow-hidden">
      <div class="absolute left-0 top-0 w-[2px] h-[902px] bg-white"></div>
      <div class="absolute left-0 right-0 top-[468px] h-[2px] bg-white"></div>
      <div class="absolute left-0 right-0 top-[684px] h-[2px] bg-white"></div>
      <div class="absolute left-0 right-0 top-[900px] h-[2px] bg-white"></div>

      <div class="absolute left-[2px] top-[33px] w-[6px] h-px bg-white"></div><span class="absolute left-[8px] top-[22px]">27000</span>
      <div class="absolute left-[2px] top-[99px] w-[6px] h-px bg-white"></div><span class="absolute left-[8px] top-[88px]">26000</span>
      <div class="absolute left-[2px] top-[165px] w-[6px] h-px bg-white"></div><span class="absolute left-[8px] top-[154px]">25000</span>
      <div class="absolute left-[2px] top-[231px] w-[6px] h-px bg-white"></div><span class="absolute left-[8px] top-[220px]">24000</span>
      <div class="absolute left-[2px] top-[297px] w-[6px] h-px bg-white"></div><span class="absolute left-[8px] top-[286px]">23000</span>
      <div class="absolute left-[2px] top-[363px] w-[6px] h-px bg-white"></div><span class="absolute left-[8px] top-[352px]">22000</span>
      <div class="absolute left-[2px] top-[429px] w-[6px] h-px bg-white"></div><span class="absolute left-[8px] top-[418px]">21000</span>
      <div class="absolute left-[2px] right-0 top-[265px] h-[23px] bg-[#0000ff] pl-[7px] text-black">23355</div>
      <div class="absolute left-[2px] right-0 top-[242px] h-[23px] bg-[#6464ff] pl-[7px] text-black">23685</div>
      <div class="absolute left-[2px] right-0 top-[273px] h-[23px] bg-[#ffff00] pl-[7px] text-black">23214</div>

      <div class="absolute left-[2px] top-[511px] w-[6px] h-px bg-white"></div><span class="absolute left-[8px] top-[500px]">150.00</span>
      <div class="absolute left-[2px] top-[547px] w-[6px] h-px bg-white"></div><span class="absolute left-[8px] top-[537px]">50.00</span>
      <div class="absolute left-[2px] top-[566px] w-[6px] h-px bg-white"></div>
      <div class="absolute left-[2px] top-[584px] w-[6px] h-px bg-white"></div><span class="absolute left-[8px] top-[573px]">-50.00</span>
      <div class="absolute left-[2px] top-[603px] w-[6px] h-px bg-white"></div>
      <div class="absolute left-[2px] top-[622px] w-[6px] h-px bg-white"></div><span class="absolute left-[8px] top-[611px]">-150.00</span>
      <div class="absolute left-[2px] top-[640px] w-[6px] h-px bg-white"></div>
      <div class="absolute left-[2px] top-[660px] w-[6px] h-px bg-white"></div><span class="absolute left-[8px] top-[649px]">-250.00</span>
      <div class="absolute left-[2px] right-0 top-[521px] h-[23px] bg-[#00ffff] pl-[7px] text-black">95.21</div>

      <div class="absolute left-[2px] top-[700px] w-[6px] h-px bg-white"></div><span class="absolute left-[8px] top-[689px]">150.00</span>
      <div class="absolute left-[2px] top-[758px] w-[6px] h-px bg-white"></div><span class="absolute left-[8px] top-[747px]">50.00</span>
      <div class="absolute left-[2px] top-[786px] w-[6px] h-px bg-white"></div>
      <div class="absolute left-[2px] top-[815px] w-[6px] h-px bg-white"></div><span class="absolute left-[8px] top-[804px]">-50.00</span>
      <div class="absolute left-[2px] top-[844px] w-[6px] h-px bg-white"></div>
      <div class="absolute left-[2px] top-[874px] w-[6px] h-px bg-white"></div><span class="absolute left-[8px] top-[863px]">-150.00</span>
      <div class="absolute left-[2px] right-0 top-[708px] h-[20px] bg-[#808080] pl-[7px] text-black">120.00</div>
      <div class="absolute left-[2px] right-0 top-[728px] h-[22px] bg-[#a0a0a0] pl-[7px] text-black">85.86</div>
      <div class="absolute left-[2px] right-0 top-[846px] h-[22px] bg-[#808080] pl-[7px] text-black">-120.00</div>

      <!-- restored child window's buttons -->
      <div class="absolute left-[17px] top-[8px] flex gap-px h-[26px]">
        <div class="w-[23px] flex items-center justify-center bg-[#dfe8f5] border border-[#aebfd0]"><span class="w-[7px] h-[2px] mt-[6px] bg-[#566]"></span></div>
        <div class="w-[23px] flex items-center justify-center bg-[#dfe8f5] border border-[#aebfd0]"><svg class="w-[10px] h-[10px]" viewBox="0 0 10 10"><path d="M3.500 2.500v-2h6v5h-2M.5 3.500h6v5h-6z" fill="none" stroke="#566"/></svg></div>
        <div class="w-[23px] flex items-center justify-center bg-[#dfe8f5] border border-[#aebfd0]"><svg class="w-[9px] h-[9px]" viewBox="0 0 9 9"><path d="M1 1l7 7M8 1L1 8" stroke="#566" stroke-width="2"/></svg></div>
      </div>
    </div>
  </div>

  <!-- Horizontal scrollbar -->
  <div class="h-[22px] shrink-0 flex items-center bg-[#f0f0f0]">
    <svg class="ml-[8px] w-[5px] h-[9px]" viewBox="0 0 5 9"><path d="M5 0v9L0 4.500z" fill="#333"/></svg>
    <div class="ml-auto w-[19px] h-[20px] flex items-center justify-center gap-[2px] bg-[#e4e4e4] border border-[#9a9a9a] rounded-[2px]">
      <span class="w-px h-[9px] bg-[#666]"></span><span class="w-px h-[9px] bg-[#666]"></span><span class="w-px h-[9px] bg-[#666]"></span>
    </div>
    <svg class="ml-[8px] mr-[9px] w-[5px] h-[9px]" viewBox="0 0 5 9"><path d="M0 0v9l5-4.500z" fill="#333"/></svg>
  </div>

  <!-- Workspace tabs -->
  <div class="h-[18px] shrink-0 flex items-center bg-[#f0f0f0] border-t border-[#333] text-[12px] leading-none text-[#222] whitespace-nowrap">
    <div class="w-[67px] flex items-center pl-[2px] text-[#777]">
      <div class="w-[16px] h-[17px] flex items-center justify-center bg-[#e8e8e8] border border-[#c8c8c8]"><svg class="w-[7px] h-[8px]" viewBox="0 0 7 8"><path d="M0 0h1.500v8H0zM7 0v8L2 4z" fill="#888"/></svg></div>
      <div class="w-[16px] h-[17px] flex items-center justify-center bg-[#e8e8e8] border border-[#c8c8c8]"><svg class="w-[5px] h-[8px]" viewBox="0 0 5 8"><path d="M5 0v8L0 4z" fill="#777"/></svg></div>
      <div class="w-[16px] h-[17px] flex items-center justify-center bg-[#e8e8e8] border border-[#c8c8c8]"><svg class="w-[5px] h-[8px]" viewBox="0 0 5 8"><path d="M0 0v8l5-4z" fill="#777"/></svg></div>
      <div class="w-[16px] h-[17px] flex items-center justify-center bg-[#e8e8e8] border border-[#c8c8c8]"><svg class="w-[7px] h-[8px]" viewBox="0 0 7 8"><path d="M5.500 0H7v8H5.500zM0 0v8l5-4z" fill="#888"/></svg></div>
    </div>
    <svg class="w-[16px] h-[17px]" viewBox="0 0 16 17"><path d="M2 0l6 17" stroke="#333" fill="none"/></svg>
    <div class="w-[87px] flex items-center justify-between"><span>STOX_TF60</span><svg class="w-[16px] h-[17px]" viewBox="0 0 16 17"><path d="M2 0l6 17h3l2-6" stroke="#333" fill="none"/></svg></div>
    <div class="w-[96px] flex items-center justify-between"><span>STOX_TF120</span><svg class="w-[16px] h-[17px]" viewBox="0 0 16 17"><path d="M2 0l6 17h3l2-6" stroke="#333" fill="none"/></svg></div>
    <div class="w-[90px] flex items-center justify-between"><span>STOX TF240</span><svg class="w-[16px] h-[17px]" viewBox="0 0 16 17"><path d="M2 0l6 17h3l2-6" stroke="#333" fill="none"/></svg></div>
    <div class="w-[85px] flex items-center justify-between"><span>STOX _100</span><svg class="w-[16px] h-[17px]" viewBox="0 0 16 17"><path d="M2 0l6 17h3l2-6" stroke="#333" fill="none"/></svg></div>
    <div class="w-[87px] flex items-center justify-between"><span>STOX_TF30</span><svg class="w-[16px] h-[17px]" viewBox="0 0 16 17"><path d="M2 0l6 17h3l2-6" stroke="#333" fill="none"/></svg></div>
    <div class="w-[76px] flex items-center justify-between"><span>FIB_TF60</span><svg class="w-[16px] h-[17px]" viewBox="0 0 16 17"><path d="M2 0l6 17h3l2-6" stroke="#333" fill="none"/></svg></div>
    <div class="w-[81px] flex items-center justify-between"><span>FIB_TF120</span><svg class="w-[16px] h-[17px]" viewBox="0 0 16 17"><path d="M2 0l6 17h3l2-6" stroke="#333" fill="none"/></svg></div>
    <div class="w-[76px] flex items-center justify-between"><span>FIB TF240</span><svg class="w-[16px] h-[17px]" viewBox="0 0 16 17"><path d="M2 0l6 17h3l2-6" stroke="#333" fill="none"/></svg></div>
    <div class="w-[71px] flex items-center justify-between"><span>FIB_100</span><svg class="w-[16px] h-[17px]" viewBox="0 0 16 17"><path d="M2 0l6 17h3l2-6" stroke="#333" fill="none"/></svg></div>
    <div class="w-[74px] flex items-center justify-between"><span>FIB_TF30</span><svg class="w-[16px] h-[17px]" viewBox="0 0 16 17"><path d="M2 0l6 17h3l2-6" stroke="#333" fill="none"/></svg></div>
    <div class="w-[113px] flex items-center justify-between"><span>BUND vs STOXX</span><svg class="w-[16px] h-[17px]" viewBox="0 0 16 17"><path d="M2 0l6 17h3l2-6" stroke="#333" fill="none"/></svg></div>
    <div class="w-[113px] flex items-center justify-between"><span>FIB Frame bassi</span><svg class="w-[16px] h-[17px]" viewBox="0 0 16 17"><path d="M2 0l6 17h3l2-6" stroke="#333" fill="none"/></svg></div>
    <div class="w-[105px] flex items-center justify-between"><span>FIB Giornaliero</span><svg class="w-[16px] h-[17px]" viewBox="0 0 16 17"><path d="M2 0l6 17h3l2-6" stroke="#333" fill="none"/></svg></div>
    <div class="w-[129px] flex items-center justify-between"><span>STOXX frame bassi</span><svg class="w-[16px] h-[17px]" viewBox="0 0 16 17"><path d="M2 0l6 17h3l2-6" stroke="#333" fill="none"/></svg></div>
    <div class="w-[121px] flex items-center justify-between"><span>STOXX giornaliero</span><svg class="w-[16px] h-[17px]" viewBox="0 0 16 17"><path d="M2 0l6 17h3l2-6" stroke="#333" fill="none"/></svg></div>
    <div class="w-[110px] flex items-center justify-between"><span>ANNUALE Indici</span><svg class="w-[16px] h-[17px]" viewBox="0 0 16 17"><path d="M2 0l6 17h3l2-6" stroke="#333" fill="none"/></svg></div>
    <div class="w-[83px] flex items-center justify-between"><span>No PREZZI</span><svg class="w-[16px] h-[17px]" viewBox="0 0 16 17"><path d="M2 0l6 17h3l2-6" stroke="#333" fill="none"/></svg></div>
    <div class="flex items-center"><span class="font-bold text-black">SITO Indici</span><svg class="ml-[5px] w-[8px] h-[17px]" viewBox="0 0 8 17"><path d="M6 0L1 17" stroke="#333" fill="none"/></svg></div>
  </div>

  <!-- Status bar -->
  <div class="h-[20px] shrink-0 flex items-center bg-[#f0edea] text-[14px] text-[#111] whitespace-nowrap">
    <span class="ml-[2px] w-[1095px]">For Help, press F1</span>
    <span class="w-[51px]">Acct:</span>
    <span class="w-[91px]">Open Psns:</span>
    <span class="w-[63px]">DT BP:</span>
    <span class="w-[87px]">Purch Pwr:</span>
    <span class="w-[93px]">Closed P/L:</span>
    <span class="w-[60px]">RT TE:</span>
    <span class="w-[84px]">Open P/L:</span>
    <span class="w-[88px] text-[#008000]">ORDER BAR</span>
    <span class="w-[70px] text-[#008000]">MACROS</span>
    <span class="w-[9px] h-[11px] mb-[3px] rounded-full bg-[radial-gradient(circle_at_35%_30%,#ff9090,#e00000_55%,#700000)]"></span>
    <span class="ml-[5px]">21/03/2022 08:43</span>
  </div>
  <div class="h-[2px] shrink-0 bg-[#3d4d5e]"></div>
</div>
</body>
</html>
